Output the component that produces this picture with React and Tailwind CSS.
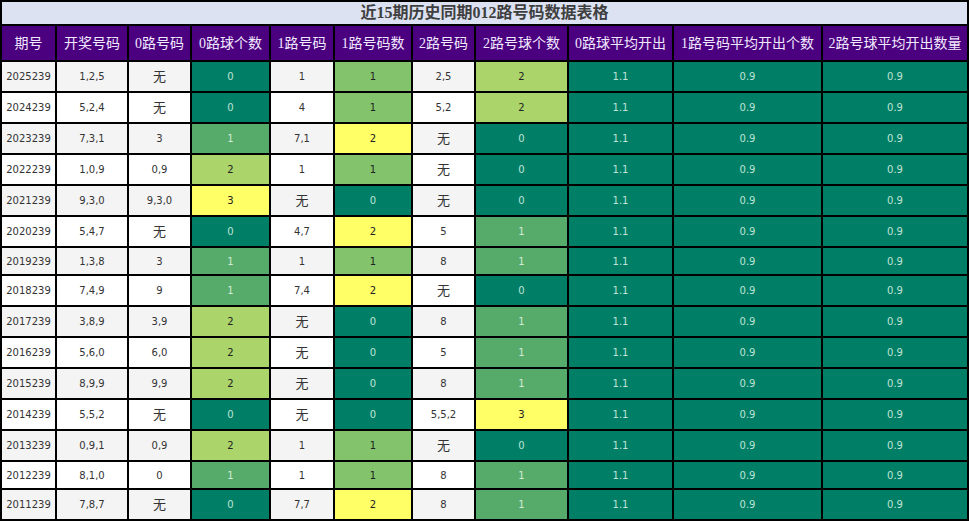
const rows = [
  ['2025239', '1,2,5', '无', 0, '1', 1, '2,5', 2],
  ['2024239', '5,2,4', '无', 0, '4', 1, '5,2', 2],
  ['2023239', '7,3,1', '3', 1, '7,1', 2, '无', 0],
  ['2022239', '1,0,9', '0,9', 2, '1', 1, '无', 0],
  ['2021239', '9,3,0', '9,3,0', 3, '无', 0, '无', 0],
  ['2020239', '5,4,7', '无', 0, '4,7', 2, '5', 1],
  ['2019239', '1,3,8', '3', 1, '1', 1, '8', 1],
  ['2018239', '7,4,9', '9', 1, '7,4', 2, '无', 0],
  ['2017239', '3,8,9', '3,9', 2, '无', 0, '8', 1],
  ['2016239', '5,6,0', '6,0', 2, '无', 0, '5', 1],
  ['2015239', '8,9,9', '9,9', 2, '无', 0, '8', 1],
  ['2014239', '5,5,2', '无', 0, '无', 0, '5,5,2', 3],
  ['2013239', '0,9,1', '0,9', 2, '1', 1, '无', 0],
  ['2012239', '8,1,0', '0', 1, '1', 1, '8', 1],
  ['2011239', '7,8,7', '无', 0, '7,7', 2, '8', 1],
]

const headers = [
  '期号',
  '开奖号码',
  '0路号码',
  '0路球个数',
  '1路号码',
  '1路号码数',
  '2路号码',
  '2路号球个数',
  '0路球平均开出',
  '1路号码平均开出个数',
  '2路号球平均开出数量',
]

// colour scale for columns whose max is 3
const scale3 = [
  'bg-[#007f66] text-[#bfe3d6]',
  'bg-[#56aa6a] text-[#d2ecd4]',
  'bg-[#abd56b] text-[#222]',
  'bg-[#ffff66] text-[#222]',
]
// colour scale for columns whose max is 2
const scale2 = ['bg-[#007f66] text-[#bfe3d6]', 'bg-[#82c36b] text-[#222]', 'bg-[#ffff66] text-[#222]']

const cellBase = 'border-l-2 border-t-2 border-black flex items-center justify-center'
const dataFont = { fontFamily: '"DejaVu Sans", "Noto Sans CJK SC", sans-serif' }

const TextCell = ({ value, striped }) => (
  <div className={`${cellBase} ${striped ? 'bg-[#f4f4f4]' : 'bg-white'} text-[#333]`}>
    {value === '无' ? <span className="text-[13px]">无</span> : <span className="text-[10px]">{value}</span>}
  </div>
)

const ColorCell = ({ value, cls }) => (
  <div className={`${cellBase} ${cls}`}>
    <span className="text-[10px]">{value}</span>
  </div>
)

export default function App() {
  return (
    <div className="w-[969px] bg-white border-b-2 border-r-2 border-black" style={dataFont}>
      <div className="h-[24px] border-l-2 border-t-2 border-black bg-[#dce2f2] flex items-center justify-center">
        <span
          className="text-[16px] font-bold text-[#3f3f3f] leading-none"
          style={{ fontFamily: '"Liberation Serif", "Noto Sans CJK SC", serif' }}
        >
          近15期历史同期012路号码数据表格
        </span>
      </div>
      <div className="grid grid-cols-[55px_72px_63px_79px_64px_78px_63px_93px_105px_149px_146px]">
        {headers.map((h) => (
          <div
            key={h}
            className={`${cellBase} h-[36px] bg-[#4b0080] text-[#f1e9ff] text-[14px] whitespace-nowrap`}
            style={{ fontFamily: '"Liberation Serif", "Noto Sans CJK SC", serif' }}
          >
            {h}
          </div>
        ))}
        {rows.map((r, i) => {
          const tall = r.includes('无')
          const striped = i % 2 === 0
          return (
            <div key={r[0]} className={`contents`}>
              <div className={`${cellBase} ${tall ? 'h-[31px]' : 'h-[28px]'} ${striped ? 'bg-[#f4f4f4]' : 'bg-white'} text-[#333]`}>
                <span className="text-[10px]">{r[0]}</span>
              </div>
              <TextCell value={r[1]} striped={striped} />
              <TextCell value={r[2]} striped={striped} />
              <ColorCell value={r[3]} cls={scale3[r[3]]} />
              <TextCell value={r[4]} striped={striped} />
              <ColorCell value={r[5]} cls={scale2[r[5]]} />
              <TextCell value={r[6]} striped={striped} />
              <ColorCell value={r[7]} cls={scale3[r[7]]} />
              <ColorCell value="1.1" cls={scale3[0]} />
              <ColorCell value="0.9" cls={scale3[0]} />
              <ColorCell value="0.9" cls={scale3[0]} />
            </div>
          )
        })}
      </div>
    </div>
  )
}
